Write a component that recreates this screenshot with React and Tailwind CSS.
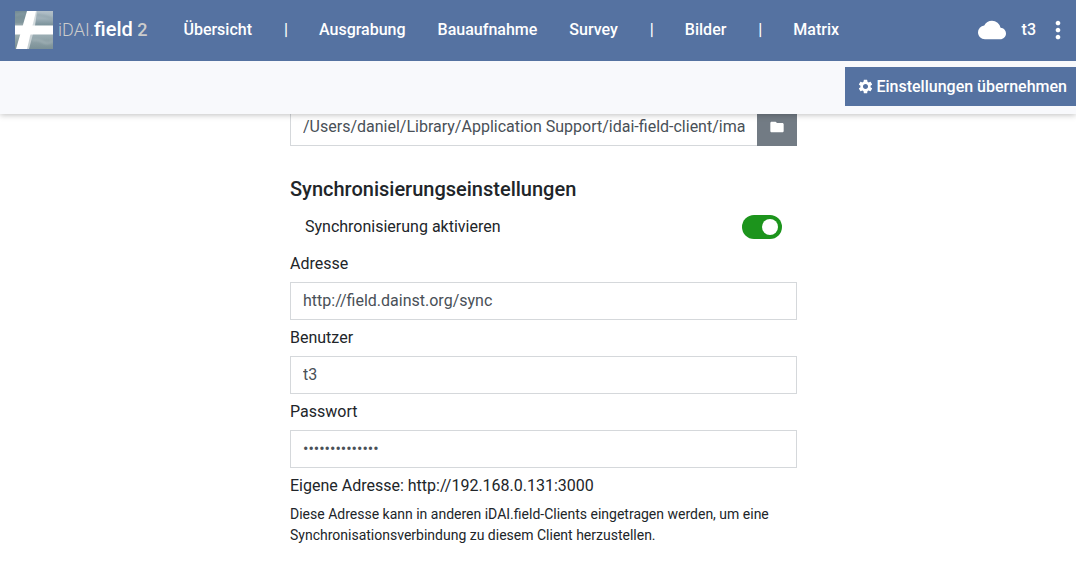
import { MdCloud, MdFolder, MdMoreVert, MdSettings } from 'react-icons/md';

const navItems = [
  { label: 'Übersicht' },
  { divider: true },
  { label: 'Ausgrabung' },
  { label: 'Bauaufnahme' },
  { label: 'Survey' },
  { divider: true },
  { label: 'Bilder' },
  { divider: true },
  { label: 'Matrix' },
];

function Logo() {
  return (
    <svg viewBox="0 0 38 38" className="size-[38px] shrink-0" aria-hidden="true">
      <defs>
        <linearGradient id="left" x1="0" y1="0" x2="0" y2="1">
          <stop offset="0" stopColor="#748c96" />
          <stop offset="0.3" stopColor="#80959b" />
          <stop offset="0.42" stopColor="#a9b7ba" />
          <stop offset="0.6" stopColor="#9eafb2" />
          <stop offset="1" stopColor="#74898f" />
        </linearGradient>
        <linearGradient id="right" x1="0" y1="0" x2="0" y2="1">
          <stop offset="0" stopColor="#b3c0c9" />
          <stop offset="0.2" stopColor="#9fb0b9" />
          <stop offset="0.35" stopColor="#7e959d" />
          <stop offset="0.65" stopColor="#9aacb2" />
          <stop offset="1" stopColor="#7b9096" />
        </linearGradient>
        <filter id="soft">
          <feGaussianBlur stdDeviation="0.8" />
        </filter>
      </defs>
      <rect width="38" height="38" fill="url(#left)" />
      <path d="M18 0H38V38H12Z" fill="url(#right)" />
      <g filter="url(#soft)" fill="none">
        <path d="M21 4Q29 4 38 8" stroke="#8fa2ab" strokeWidth="1.5" />
        <path d="M17 29Q23 28 28 31T38 30" stroke="#a5b4b9" strokeWidth="1.5" />
        <path d="M0 4Q6 2 11 3" stroke="#94a7ae" strokeWidth="1" />
      </g>
      <path d="M20 0H22L20 15H17Z" fill="#d2dadd" />
      <path d="M15 23H18L14 38H11Z" fill="#c8d1d4" />
      <path d="M12 0H21L12 38H1Z" fill="#fff" />
      <path d="M0 14.5H38V23.5H0Z" fill="#fff" />
    </svg>
  );
}

function Field({ id, label, type = 'text', value }) {
  return (
    <div className="flex flex-col gap-1.5">
      <label htmlFor={id}>{label}</label>
      <input
        id={id}
        type={type}
        defaultValue={value}
        className="h-[38px] w-full border border-[#d5d8db] bg-white px-3 pb-0.5 text-[#495057] outline-none"
      />
    </div>
  );
}

export default function App() {
  return (
    <div className="font-['Roboto',sans-serif] text-base text-[#212529]">
      <header className="relative z-10 bg-[#f8f9fc] shadow-[0_1px_6px_rgba(0,0,0,0.25)]">
        <nav className="flex h-[61px] items-center bg-[#5572a1] pr-1 pb-0.5 pl-[15px] font-medium text-white">
          <a href="#" className="flex items-center gap-[5px]">
            <Logo />
            <span className="text-lg font-light whitespace-nowrap text-[#cccccc]">
              iDAI.<b className="text-xl font-medium text-white">field</b>{' '}
              <span className="font-medium">2</span>
            </span>
          </a>
          <ul className="ml-9 flex items-center gap-8">
            {navItems.map((item, i) =>
              item.divider ? (
                <li key={i} className="w-[3px]">|</li>
              ) : (
                <li key={i}>
                  <a href="#">{item.label}</a>
                </li>
              ),
            )}
          </ul>
          <div className="ml-auto flex items-center">
            <MdCloud className="mr-4 size-7" aria-label="Synchronisierung" />
            <span>t3</span>
            <button type="button" aria-label="Menü" className="ml-2">
              <MdMoreVert className="size-7" />
            </button>
          </div>
        </nav>
        <div className="flex justify-end pt-1.5 pb-2">
          <button
            type="button"
            className="flex h-[39px] items-center gap-0.5 bg-[#5572a1] pr-[9px] pl-3 font-medium text-white"
          >
            <MdSettings className="size-[17px]" aria-hidden="true" />
            Einstellungen übernehmen
          </button>
        </div>
      </header>

      <main className="-mt-1.5 pl-[11px]">
        <form className="mx-auto flex max-w-[507px] flex-col">
          <div className="flex">
            <input
              type="text"
              aria-label="Bilderverzeichnis"
              defaultValue="/Users/daniel/Library/Application Support/idai-field-client/imagestore"
              className="h-[38px] min-w-0 flex-1 border border-r-0 border-[#d5d8db] px-3 pb-0.5 text-[#495057] outline-none"
            />
            <button
              type="button"
              aria-label="Verzeichnis wählen"
              className="flex w-10 items-center justify-center bg-[#727b84] text-white"
            >
              <MdFolder className="size-4" />
            </button>
          </div>

          <h2 className="mt-[31px] text-xl leading-6 font-medium">Synchronisierungseinstellungen</h2>

          <div className="mt-3.5 flex items-center justify-between px-[15px]">
            <label htmlFor="sync">Synchronisierung aktivieren</label>
            <input
              id="sync"
              type="checkbox"
              role="switch"
              defaultChecked
              className="h-6 w-10 appearance-none rounded-full bg-[#999999] p-1 before:block before:size-4 before:rounded-full before:bg-white checked:bg-[#1c941c] checked:before:ml-auto"
            />
          </div>

          <div className="mt-[13px] flex flex-col gap-1.5">
            <Field id="address" label="Adresse" value="http://field.dainst.org/sync" />
            <Field id="user" label="Benutzer" value="t3" />
            <Field id="password" label="Passwort" type="password" value="abcdefghijklmn" />
            <p>Eigene Adresse: http://192.168.0.131:3000</p>
            <p className="text-sm leading-[21px]">
              Diese Adresse kann in anderen iDAI.field-Clients eingetragen werden, um eine
              Synchronisationsverbindung zu diesem Client herzustellen.
            </p>
          </div>
        </form>
      </main>
    </div>
  );
}
